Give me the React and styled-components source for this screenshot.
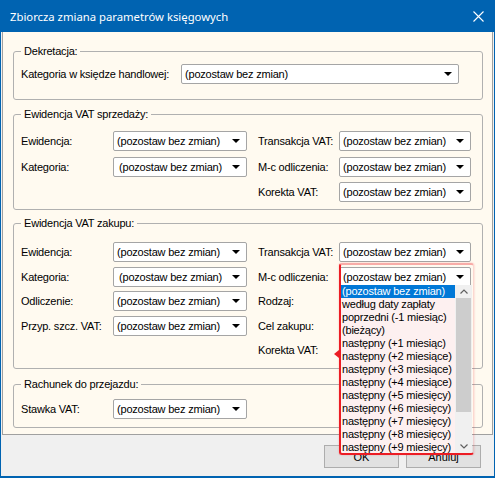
import React from 'react';
import styled, { createGlobalStyle } from 'styled-components';

const Global = createGlobalStyle`
  html, body { margin: 0; padding: 0; background: #fff; }
  body {
    font-family: "Liberation Sans", Arial, sans-serif;
    font-size: 11px;
    color: #000;
    letter-spacing: -0.2px;
  }
  * { box-sizing: border-box; }
`;

const Window = styled.div`
  width: 495px;
  height: 478px;
  border: 1px solid #0063b1;
  border-top: 0;
  border-bottom-width: 2px;
  background: #f0f0f0;
  display: flex;
  flex-direction: column;
`;

const TitleBar = styled.div`
  height: 32px;
  flex: none;
  background: #0063b1;
  display: flex;
  align-items: center;
  justify-content: space-between;
  padding: 0 10px 0 9px;
`;

const Title = styled.div`
  color: #fff;
  font-family: "Noto Sans", "Open Sans", sans-serif;
  font-size: 11.3px;
  letter-spacing: 0;
`;

const Panel = styled.div`
  margin: 0 1px;
  background: #fffaf0;
  border: 1px solid #a0a0a0;
  border-top: 0;
  padding: 12px 9px 6px 10px;
  display: flex;
  flex-direction: column;
`;

const Group = styled.fieldset`
  margin: ${p => p.$mt || 0}px 0 0;
  padding: ${p => p.$pt}px 10px ${p => p.$pb}px 7px;
  border: 1px solid #b0b0b0;
  border-radius: 3px;
  min-width: 0;
`;

const Legend = styled.legend`
  padding: 0 3px;
  line-height: 14px;
  font-size: 11px;
`;

const Grid = styled.div`
  display: grid;
  grid-template-columns: ${p => p.$cols};
  row-gap: ${p => p.$gap || 0}px;
  align-items: center;
`;

const Label = styled.div`
  white-space: nowrap;
  padding-left: ${p => (p.$right ? 11 : 0)}px;
  line-height: 14px;
`;

const SelectBox = styled.div`
  position: relative;
  height: 20px;
  width: ${p => p.$w}px;
  background: #fff;
  border: 1px solid #a5a5a5;
  border-radius: 2px;
  display: flex;
  align-items: center;
  padding-left: ${p => (p.$indent ? 5 : 3)}px;
  white-space: nowrap;
`;

const Arrow = styled.span`
  margin-left: auto;
  margin-right: 6px;
  width: 0;
  height: 0;
  border-left: 4px solid transparent;
  border-right: 4px solid transparent;
  border-top: 4px solid #000;
`;

const Frame = styled.div`
  position: absolute;
  left: -1px;
  top: -5px;
  width: 135px;
  height: 192px;
  border-left: 2px solid #ec1c24;
  border-bottom: 2px solid #ec1c24;
  border-top: 2px solid rgba(236, 28, 36, 0.35);
  border-right: 1px solid rgba(236, 28, 36, 0.15);
  border-radius: 3px;
  box-shadow: 0 0 2px rgba(236, 28, 36, 0.3);
  pointer-events: none;
  z-index: 3;
`;

const Pointer = styled.span`
  position: absolute;
  left: -7px;
  top: 85px;
  width: 0;
  height: 0;
  border-top: 4px solid transparent;
  border-bottom: 4px solid transparent;
  border-right: 5px solid #ec1c24;
`;

const Popup = styled.div`
  position: absolute;
  left: 1px;
  top: 17.5px;
  width: 131px;
  height: 168px;
  display: flex;
  background: #fdf0f0;
  z-index: 2;
  overflow: hidden;
`;

const Items = styled.div`
  flex: 1;
  display: flex;
  flex-direction: column;
`;

const Item = styled.div`
  height: 13px;
  flex: none;
  line-height: 13px;
  padding-left: 1px;
  white-space: nowrap;
  color: ${p => (p.$sel ? '#fff' : '#000')};
  background: ${p => (p.$sel ? '#0078d7' : 'transparent')};
`;

const Scrollbar = styled.div`
  width: 17px;
  flex: none;
  background: #f0f0f0;
  display: flex;
  flex-direction: column;
  align-items: center;
`;

const ScrollBtn = styled.div`
  height: 13px;
  width: 100%;
  display: flex;
  align-items: center;
  justify-content: center;
  margin-top: ${p => (p.$down ? 'auto' : 0)};
`;

const Thumb = styled.div`
  width: 15px;
  height: 114px;
  background: #cdcdcd;
`;

const Footer = styled.div`
  flex: 1;
  display: flex;
  justify-content: flex-end;
  align-items: flex-start;
  gap: 7px;
  padding: 10px 13px 0 0;
`;

const Button = styled.button`
  width: 75px;
  height: 23px;
  background: #e1e1e1;
  border: 1px solid #adadad;
  font-family: "Liberation Sans", Arial, sans-serif;
  font-size: 11px;
  color: #000;
  padding: 0;
`;

const Select = ({ w = 134, indent, hidden, children }) => (
  <SelectBox $w={w} $indent={indent}>
    {!hidden && <span>(pozostaw bez zmian)</span>}
    <Arrow />
    {children}
  </SelectBox>
);

const options = [
  '(pozostaw bez zmian)',
  'według daty zapłaty',
  'poprzedni (-1 miesiąc)',
  '(bieżący)',
  'następny (+1 miesiąc)',
  'następny (+2 miesiące)',
  'następny (+3 miesiące)',
  'następny (+4 miesiące)',
  'następny (+5 miesięcy)',
  'następny (+6 miesięcy)',
  'następny (+7 miesięcy)',
  'następny (+8 miesięcy)',
  'następny (+9 miesięcy)',
];

const Chevron = ({ down }) => (
  <svg width="8" height="5" viewBox="0 0 8 5">
    <path
      d={down ? 'M0.5 0.5 L4 4 L7.5 0.5' : 'M0.5 4.5 L4 1 L7.5 4.5'}
      fill="none"
      stroke="#606060"
      strokeWidth="1.2"
    />
  </svg>
);

const COLS = '92px 134px 92px 132px';

export default function App() {
  return (
    <>
      <Global />
      <Window>
        <TitleBar>
          <Title>Zbiorcza zmiana parametrów księgowych</Title>
          <svg width="11" height="11" viewBox="0 0 11 11">
            <path d="M0.5 0.5 L10.5 10.5 M10.5 0.5 L0.5 10.5" stroke="#fff" strokeWidth="1.1" />
          </svg>
        </TitleBar>
        <Panel>
          <Group $pt={6} $pb={15}>
            <Legend>Dekretacja:</Legend>
            <Grid $cols="160px 278px">
              <Label>Kategoria w księdze handlowej:</Label>
              <Select w={278} />
            </Grid>
          </Group>

          <Group $mt={7} $pt={10} $pb={7}>
            <Legend>Ewidencja VAT sprzedaży:</Legend>
            <Grid $cols={COLS} $gap={5.5}>
              <Label>Ewidencja:</Label>
              <Select />
              <Label $right>Transakcja VAT:</Label>
              <Select w={132} />
              <Label>Kategoria:</Label>
              <Select indent />
              <Label $right>M-c odliczenia:</Label>
              <Select w={132} />
              <span />
              <span />
              <Label $right>Korekta VAT:</Label>
              <Select w={132} />
            </Grid>
          </Group>

          <Group $mt={6} $pt={12} $pb={8}>
            <Legend>Ewidencja VAT zakupu:</Legend>
            <Grid $cols={COLS} $gap={4.5}>
              <Label>Ewidencja:</Label>
              <Select />
              <Label $right>Transakcja VAT:</Label>
              <Select w={132} />
              <Label>Kategoria:</Label>
              <Select indent />
              <Label $right>M-c odliczenia:</Label>
              <Select w={132}>
                <Popup>
                  <Items>
                    {options.map((o, i) => (
                      <Item key={o} $sel={i === 0}>{o}</Item>
                    ))}
                  </Items>
                  <Scrollbar>
                    <ScrollBtn><Chevron /></ScrollBtn>
                    <Thumb />
                    <ScrollBtn $down><Chevron down /></ScrollBtn>
                  </Scrollbar>
                </Popup>
                <Frame>
                  <Pointer />
                </Frame>
              </Select>
              <Label>Odliczenie:</Label>
              <Select />
              <Label $right>Rodzaj:</Label>
              <Select w={132} hidden />
              <Label>Przyp. szcz. VAT:</Label>
              <Select />
              <Label $right>Cel zakupu:</Label>
              <Select w={132} hidden />
              <span />
              <span />
              <Label $right>Korekta VAT:</Label>
              <Select w={132} hidden />
            </Grid>
          </Group>

          <Group $mt={8} $pt={8} $pb={8}>
            <Legend>Rachunek do przejazdu:</Legend>
            <Grid $cols="92px 134px">
              <Label>Stawka VAT:</Label>
              <Select />
            </Grid>
          </Group>
        </Panel>
        <Footer>
          <Button>OK</Button>
          <Button>Anuluj</Button>
        </Footer>
      </Window>
    </>
  );
}
